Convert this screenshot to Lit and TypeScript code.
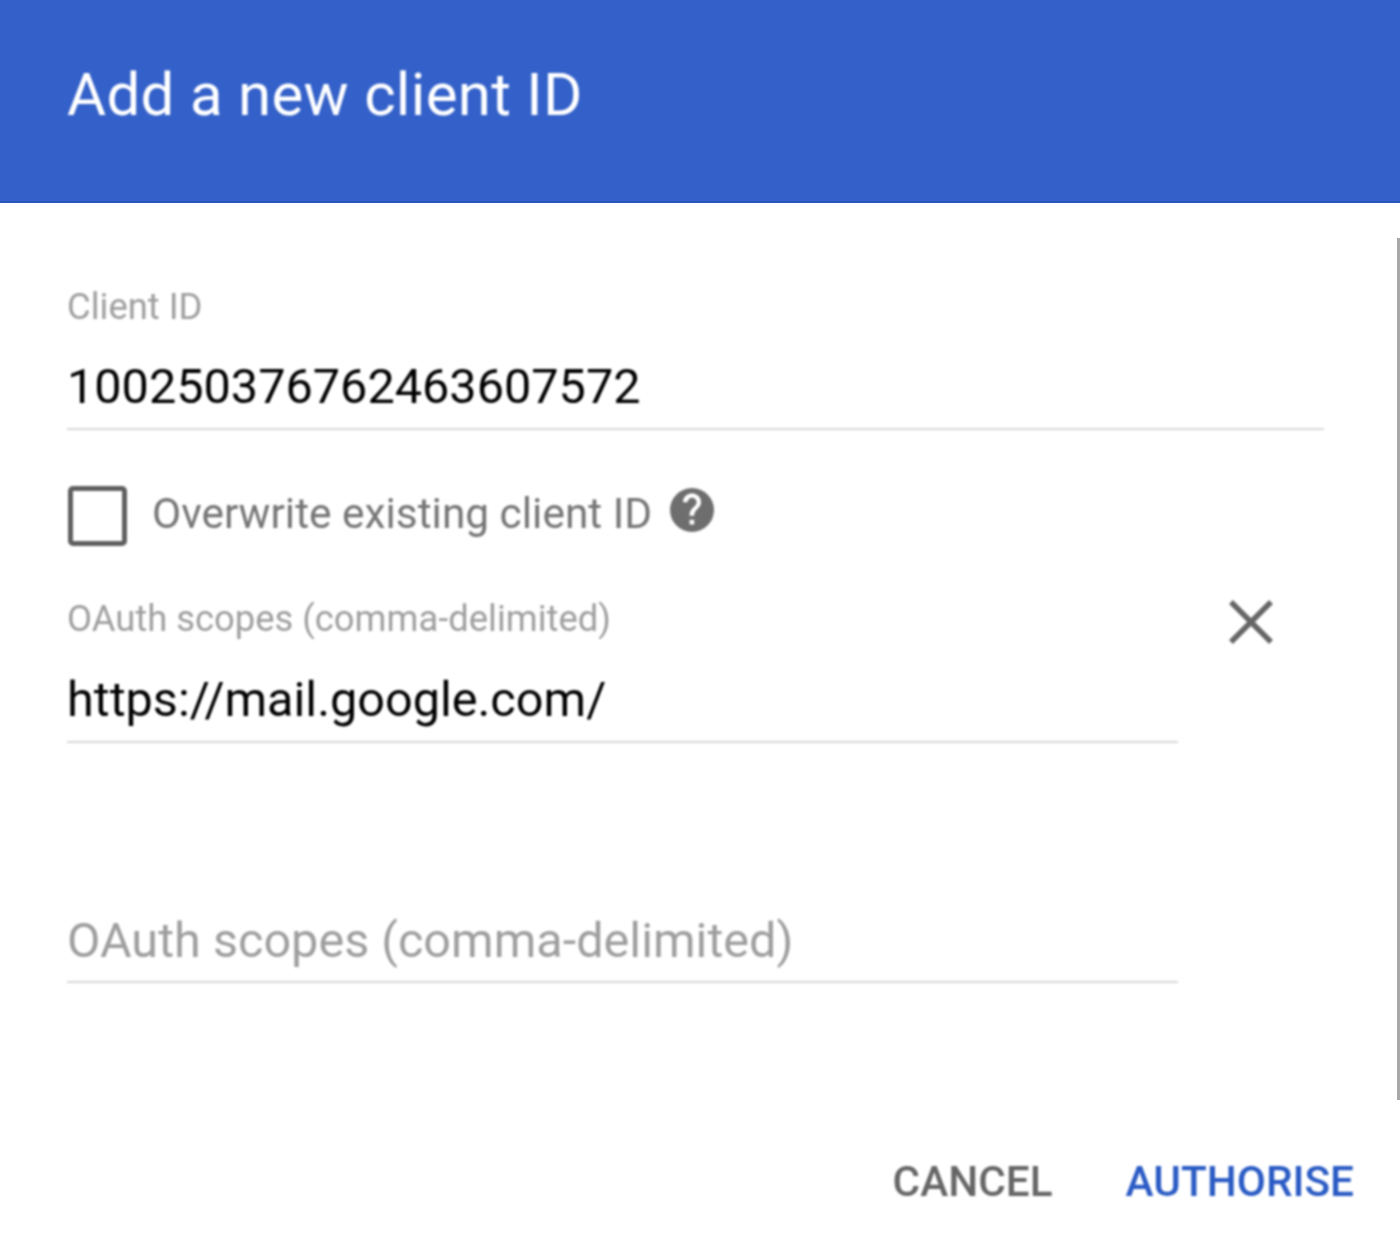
import { LitElement, html, css } from "lit";
import { customElement } from "lit/decorators.js";

@customElement("app-root")
export class AppRoot extends LitElement {
  static styles = css`
    :host { display: block; width: 1400px; height: 1257px; background: #fff; font-family: Roboto, "Liberation Sans", sans-serif; position: relative; overflow: hidden; }
    .page { height: 1257px; display: flex; flex-direction: column; }
    header { height: 203px; box-sizing: border-box; background: #3461c9; border-bottom: 2px solid #2a55c0; color: #fff; font-size: 60px; letter-spacing: 0.3px; padding: 62px 0 0 67px; line-height: 66px; flex: none; }
    header span { display: block; filter: blur(0.9px); }
    main { flex: 1; padding: 0 76px 0 67px; display: flex; flex-direction: column; filter: blur(0.9px); }
    .label { font-size: 36.4px; line-height: 40px; padding-top: 1px; color: #9e9e9e; }
    .value { font-size: 48.6px; line-height: 56px; color: #000; }
    .field { border-bottom: 2px solid #d8d8d8; }
    .client { margin-top: 83px; height: 144px; box-sizing: border-box; }
    .client .value { margin-top: 32px; }
    .check { display: flex; align-items: center; margin-top: 55px; height: 62px; }
    .box { width: 59px; height: 60px; margin-left: 1px; margin-top: -1px; box-sizing: border-box; border: 5px solid #5f5f5f; border-radius: 5px; flex: none; }
    .check-label { font-size: 42.4px; color: #757575; margin-left: 25px; line-height: 50px; margin-top: -4px; }
    .help { margin-left: 16px; margin-top: -12px; flex: none; display: block; }
    .scope-row { display: flex; margin-top: 51px; align-items: flex-start; }
    .scope { width: 1111px; height: 145px; box-sizing: border-box; flex: none; }
    .scope .value { margin-top: 33px; }
    .close { margin-left: 50px; margin-top: 1px; flex: none; display: block; }
    .empty { width: 1111px; margin-top: 167px; height: 73px; box-sizing: border-box; font-size: 48.6px; line-height: 62px; color: #9e9e9e; }
    footer { display: flex; justify-content: flex-end; gap: 73px; padding: 0 46px 52px 0; font-size: 42.3px; line-height: 47px; font-weight: 500; flex: none; filter: blur(0.9px); }
    .cancel { color: #666; }
    .ok { color: #2a5bc4; }
    .scroll { position: absolute; right: 0; top: 238px; width: 3px; height: 862px; background: #a8a8a8; }
  `;

  render() {
    return html`
      <div class="page">
        <header><span>Add a new client ID</span></header>
        <main>
          <div class="field client">
            <div class="label">Client ID</div>
            <div class="value">100250376762463607572</div>
          </div>
          <div class="check">
            <div class="box"></div>
            <span class="check-label">Overwrite existing client ID</span>
            <svg class="help" width="48" height="48" viewBox="0 0 24 24"><path fill="#6e6e6e" d="M12 1a11 11 0 1 0 0 22 11 11 0 0 0 0-22zm1.1 18.2h-2.3v-2.3h2.3v2.3zm2.4-8.6l-1 1.1c-.9.9-1.4 1.6-1.4 3.2h-2.3v-.6c0-1.2.5-2.3 1.4-3.2l1.4-1.4c.4-.4.7-1 .7-1.6 0-1.2-1-2.2-2.2-2.2s-2.3 1-2.3 2.2H7.5a4.5 4.5 0 0 1 9 0c0 1-.4 1.9-1 2.5z"/></svg>
          </div>
          <div class="scope-row">
            <div class="field scope">
              <div class="label">OAuth scopes (comma-delimited)</div>
              <div class="value">https://mail.google.com/</div>
            </div>
            <svg class="close" width="46" height="46" viewBox="0 0 46 46"><path d="M3 3 43 43M43 3 3 43" stroke="#666" stroke-width="5.5" fill="none"/></svg>
          </div>
          <div class="field empty">OAuth scopes (comma-delimited)</div>
        </main>
        <footer><span class="cancel">CANCEL</span><span class="ok">AUTHORISE</span></footer>
      </div>
      <div class="scroll"></div>
    `;
  }
}
